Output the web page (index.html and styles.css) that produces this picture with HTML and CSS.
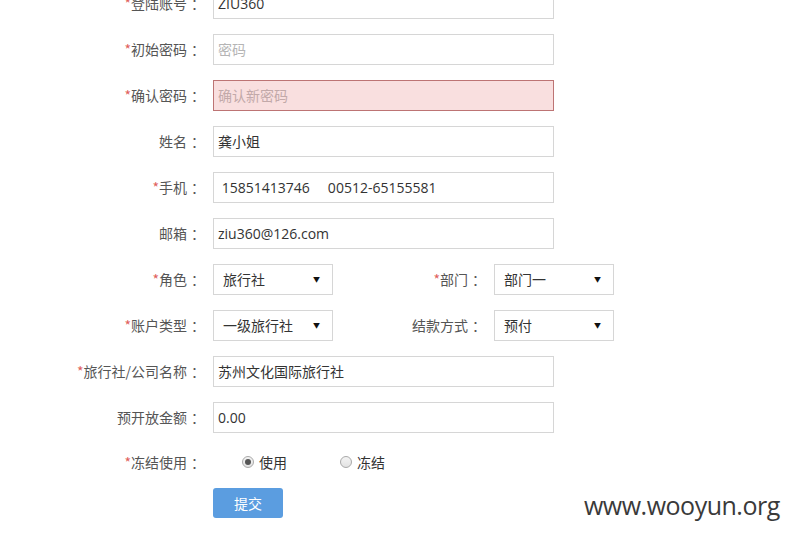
FILE: index.html
```
<!doctype html>
<html lang="zh-CN">
    <head>
        <meta charset="UTF-8" />
        <title>新增用户</title>
        <link rel="stylesheet" href="styles.css">
    </head>
    <body>
        <form class="user-form">
            <div class="row">
                <label class="label"><span class="req">*</span>登陆账号<span class="colon">：</span></label>
                <input class="text-input" type="text" value="ZIU360" />
            </div>
            <div class="row">
                <label class="label"><span class="req">*</span>初始密码<span class="colon">：</span></label>
                <input class="text-input" type="text" placeholder="密码" />
            </div>
            <div class="row">
                <label class="label"><span class="req">*</span>确认密码<span class="colon">：</span></label>
                <input class="text-input has-error" type="text" placeholder="确认新密码" />
            </div>
            <div class="row">
                <label class="label">姓名<span class="colon">：</span></label>
                <input class="text-input" type="text" value="龚小姐" />
            </div>
            <div class="row">
                <label class="label"><span class="req">*</span>手机<span class="colon">：</span></label>
                <input class="text-input" type="text" value=" 15851413746     00512-65155581" />
            </div>
            <div class="row">
                <label class="label">邮箱<span class="colon">：</span></label>
                <input class="text-input" type="text" value="ziu360@126.com" />
            </div>
            <div class="row">
                <label class="label"><span class="req">*</span>角色<span class="colon">：</span></label>
                <div class="select"><span>旅行社</span><span class="arrow">▼</span></div>
                <label class="label label-second"><span class="req">*</span>部门<span class="colon">：</span></label>
                <div class="select"><span>部门一</span><span class="arrow">▼</span></div>
            </div>
            <div class="row">
                <label class="label"><span class="req">*</span>账户类型<span class="colon">：</span></label>
                <div class="select"><span>一级旅行社</span><span class="arrow">▼</span></div>
                <label class="label label-second">结款方式<span class="colon">：</span></label>
                <div class="select"><span>预付</span><span class="arrow">▼</span></div>
            </div>
            <div class="row">
                <label class="label"><span class="req">*</span>旅行社/公司名称<span class="colon">：</span></label>
                <input class="text-input" type="text" value="苏州文化国际旅行社" />
            </div>
            <div class="row">
                <label class="label">预开放金额<span class="colon">：</span></label>
                <input class="text-input" type="text" value="0.00" />
            </div>
            <div class="row radio-row">
                <label class="label"><span class="req">*</span>冻结使用<span class="colon">：</span></label>
                <div class="radios">
                    <label class="radio"><span class="dot checked"></span>使用</label>
                    <label class="radio"><span class="dot"></span>冻结</label>
                </div>
            </div>
            <div class="actions">
                <button type="button" class="btn-submit">提交</button>
            </div>
        </form>

        <div class="watermark">www.wooyun.org</div>
    </body>
</html>
```

FILE: styles.css
```
* {
    margin: 0;
    padding: 0;
    box-sizing: border-box;
}

body {
    font-family: "Open Sans", "Noto Sans CJK SC", sans-serif;
    font-size: 14px;
    color: #333;
    background: #fff;
    width: 790px;
    height: 535px;
    overflow: hidden;
    position: relative;
}

.user-form {
    margin-top: -12px;
    display: flex;
    flex-direction: column;
    gap: 16px;
}

.row {
    display: flex;
    align-items: center;
    height: 30px;
}

.label {
    width: 201px;
    margin-right: 12px;
    text-align: right;
    color: #555;
    font-family: "Noto Sans CJK SC", sans-serif;
    white-space: nowrap;
}

.label-second {
    width: 149px;
    margin-right: 12px;
}

/* SC colon sits left in its cell, nudge it to the middle */
.colon {
    padding-left: 4px;
    margin-right: -4px;
}

.req {
    color: #e0605c;
}

.text-input {
    width: 341px;
    height: 31px;
    border: 1px solid #d6d6d6;
    padding: 0 4px;
    font: inherit;
    color: #333;
    background: #fff;
    outline: none;
}

.text-input::placeholder {
    color: #b5b5b5;
    font-family: "Noto Sans CJK SC", sans-serif;
}

.text-input.has-error {
    background: #f9dfdf;
    border-color: #bd7474;
}

.text-input.has-error::placeholder {
    color: #c2a9a9;
}

.select {
    width: 120px;
    height: 31px;
    border: 1px solid #d6d6d6;
    display: flex;
    align-items: center;
    justify-content: space-between;
    padding: 0 12px 0 9px;
    font-family: "Noto Sans CJK SC", sans-serif;
    color: #333;
}

.arrow {
    font-size: 7px;
    color: #111;
}

.radio-row {
    height: 28px;
}

.radios {
    display: flex;
    align-items: center;
    padding-left: 29px;
    gap: 53px;
    font-family: "Noto Sans CJK SC", sans-serif;
}

.radio {
    display: flex;
    align-items: center;
    gap: 5px;
    color: #333;
}

.dot {
    width: 12px;
    height: 12px;
    border-radius: 50%;
    border: 1px solid #a9a9a9;
    background: linear-gradient(#f4f4f4, #e2e2e2);
    display: flex;
    align-items: center;
    justify-content: center;
}

.dot.checked::after {
    content: "";
    width: 6px;
    height: 6px;
    border-radius: 50%;
    background: #555;
}

.actions {
    padding-left: 213px;
    margin-top: -4px;
}

.btn-submit {
    width: 70px;
    height: 30px;
    border: none;
    border-radius: 3px;
    background: #5b9de0;
    color: #fff;
    font-family: "Noto Sans CJK SC", sans-serif;
    font-size: 14px;
}

.watermark {
    position: absolute;
    left: 584px;
    top: 488px;
    font-family: "Open Sans", sans-serif;
    font-size: 25px;
    letter-spacing: -0.5px;
    color: #3a3a3a;
}
```
